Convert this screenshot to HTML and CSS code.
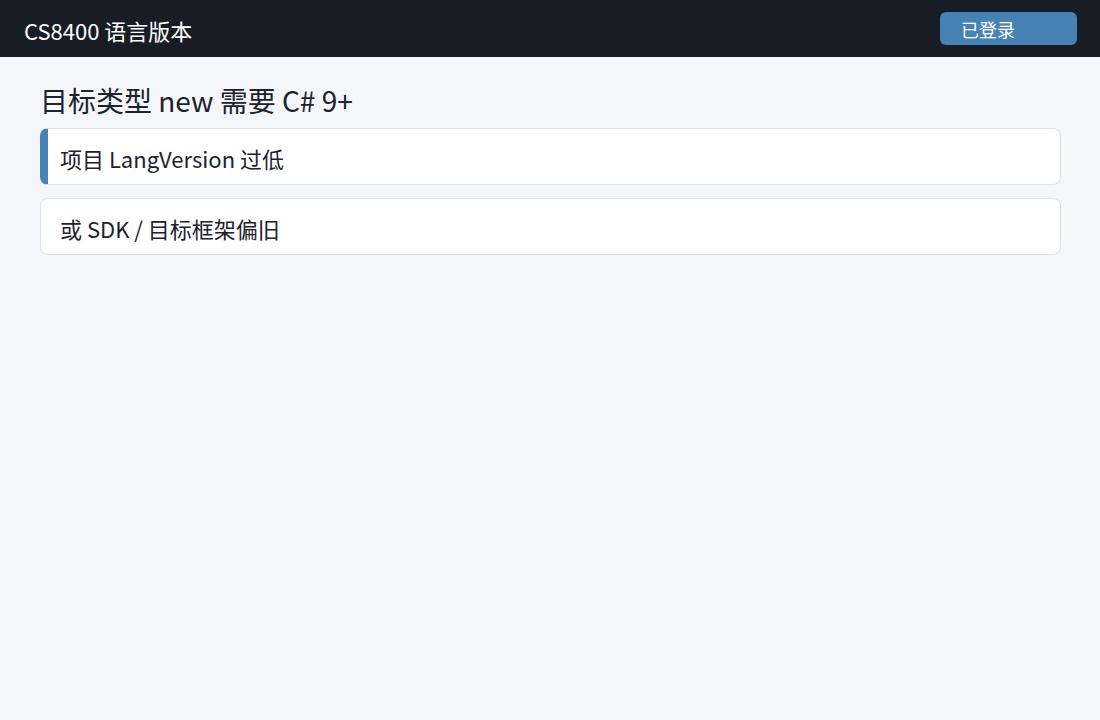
FILE: index.html
```html
<!DOCTYPE html>
<html lang="zh-CN">
<head>
<meta charset="utf-8">
<title>CS8400 语言版本</title>
<link rel="stylesheet" href="styles.css">
</head>
<body>
<header class="topbar">
  <div class="title">CS8400 语言版本</div>
  <button class="login">已登录</button>
</header>
<main class="content">
  <h1 class="heading">目标类型 new 需要 C# 9+</h1>
  <div class="list">
    <div class="item active">项目 LangVersion 过低</div>
    <div class="item">或 SDK / 目标框架偏旧</div>
  </div>
</main>
</body>
</html>
```
FILE: styles.css
```css
html, body {
  margin: 0;
  padding: 0;
}
body {
  background: #f5f6fa;
  font-family: "Noto Sans CJK SC", "Noto Sans", sans-serif;
  color: #1c2230;
  width: 1100px;
  height: 720px;
  overflow: hidden;
}
.topbar {
  height: 57px;
  background: #181c25;
  display: flex;
  align-items: center;
  justify-content: space-between;
  padding: 0 23px 0 24px;
  box-sizing: border-box;
}
.title {
  color: #ffffff;
  font-size: 22px;
  line-height: 1;
  padding-top: 2px;
}
.login {
  width: 137px;
  height: 33px;
  background: #4682b4;
  color: #ffffff;
  border: none;
  border-radius: 6px;
  font-family: inherit;
  font-size: 18px;
  text-align: left;
  padding: 1px 0 0 21px;
  line-height: 1;
}
.content {
  padding: 26px 39px 0 40px;
}
.heading {
  margin: 0 0 11px 0;
  font-size: 28px;
  font-weight: 400;
  line-height: 34px;
}
.list {
  display: flex;
  flex-direction: column;
  gap: 13px;
}
.item {
  background: #ffffff;
  border: 1px solid #dde1ea;
  border-radius: 8px;
  height: 57px;
  box-sizing: border-box;
  display: flex;
  align-items: center;
  padding: 2px 0 0 19px;
  font-size: 22px;
}
.item.active {
  border-left: 8px solid #4682b4;
  padding-left: 12px;
}
```
